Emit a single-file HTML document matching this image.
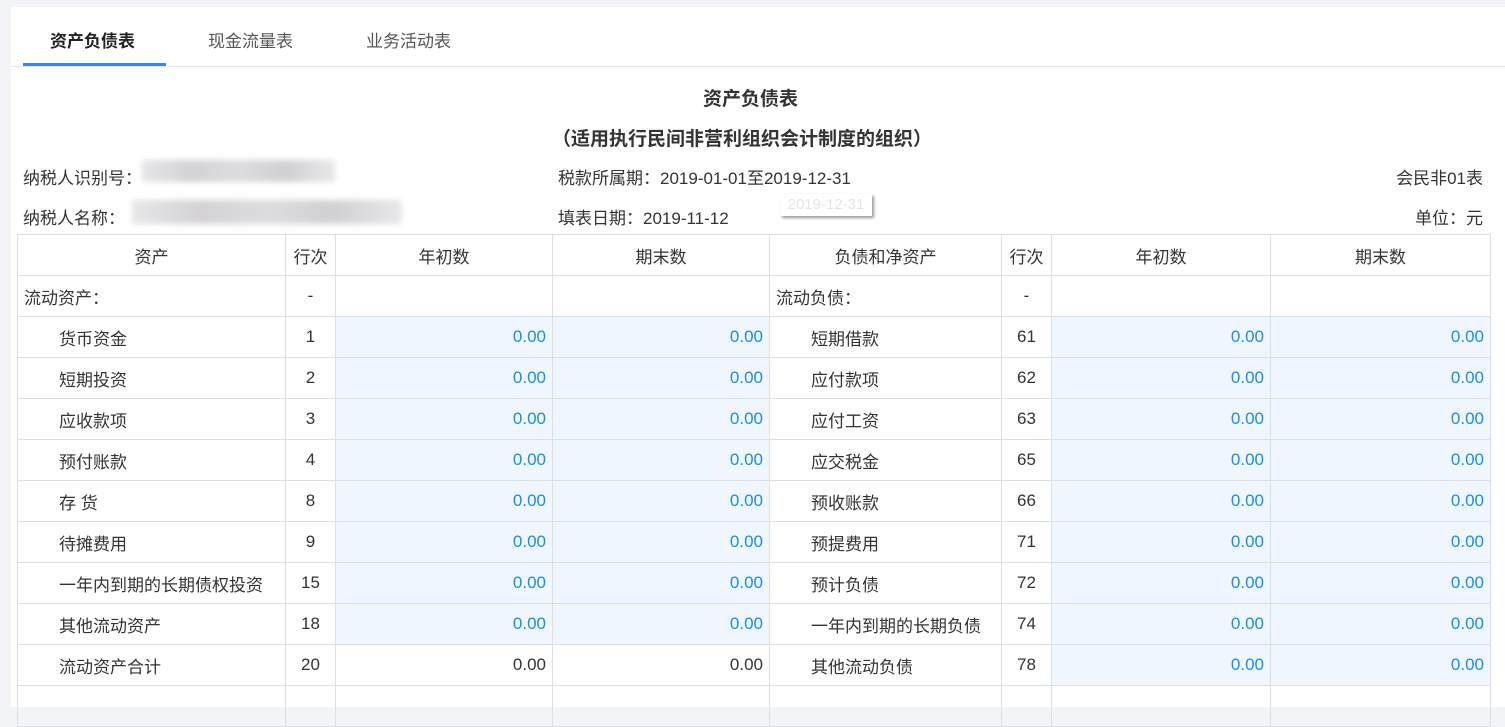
<!DOCTYPE html>
<html><head><meta charset="utf-8"><style>
body{margin:0;background:#f3f4f7;font-family:"Liberation Sans","Noto Sans CJK SC",sans-serif;color:#333;width:1505px;height:694px;overflow:hidden;position:relative}
.panel{position:absolute;left:11px;top:7px;width:1494px;height:700px;background:#fff}
.tabs{position:absolute;left:0;top:0;width:1494px;height:59px;border-bottom:1px solid #e4e6ea}
.tab{position:absolute;top:20px;font-size:17px;color:#555}
.tab.a{color:#222;font-weight:bold}
.ul{position:absolute;left:12px;top:56px;width:143px;height:3px;background:#3a86f0}
.t{position:absolute;font-size:17px;color:#333;white-space:nowrap}
.blur{position:absolute;background:linear-gradient(90deg,#e6e6e8,#d4d2d4,#dcdcde,#d0d0d2,#e8e8ea);filter:blur(3px)}
table{position:absolute;left:17px;top:234px;border-collapse:collapse;font-size:17px;table-layout:fixed}
td{border:1px solid #dcdfe4;height:40px;padding:0 6px;color:#333;white-space:nowrap;overflow:hidden}
td.c{text-align:center}
td.v{background:#f0f6fd;color:#1a8ee0;text-align:right}
td.r{text-align:right}
td.i{padding-left:41px}
</style></head><body>
<div class="panel">
<div class="tabs">
<div class="tab a" style="left:39px">资产负债表</div>
<div class="tab" style="left:197px">现金流量表</div>
<div class="tab" style="left:355px">业务活动表</div>
<div class="ul"></div>
</div>
</div>
<div class="t" style="left:703px;top:84px;font-weight:bold;font-size:19px">资产负债表</div>
<div class="t" style="left:552px;top:124px;font-weight:bold;font-size:19px">（适用执行民间非营利组织会计制度的组织）</div>
<div class="t" style="left:23px;top:164px">纳税人识别号：</div>
<div class="blur" style="left:142px;top:160px;width:193px;height:22px"></div>
<div class="t" style="left:23px;top:204px">纳税人名称：</div>
<div class="blur" style="left:132px;top:200px;width:270px;height:24px"></div>
<div class="t" style="left:558px;top:164px">税款所属期：2019-01-01至2019-12-31</div>
<div class="t" style="left:558px;top:204px">填表日期：2019-11-12</div>
<div style="position:absolute;left:780px;top:194px;width:92px;height:22px;background:#fff;box-shadow:2px 2px 3px #999;color:#e6e6e6;font-size:15px;text-align:center;line-height:22px">2019-12-31</div>
<div class="t" style="right:22px;top:164px">会民非01表</div>
<div class="t" style="right:22px;top:204px">单位：元</div>
<table>
<colgroup><col style="width:268px"><col style="width:50px"><col style="width:217px"><col style="width:217px"><col style="width:232px"><col style="width:50px"><col style="width:219px"><col style="width:220px"></colgroup>
<tr><td class="c">资产</td><td class="c">行次</td><td class="c">年初数</td><td class="c">期末数</td><td class="c">负债和净资产</td><td class="c">行次</td><td class="c">年初数</td><td class="c">期末数</td></tr>
<tr><td>流动资产：</td><td class="c">-</td><td></td><td></td><td>流动负债：</td><td class="c">-</td><td></td><td></td></tr>
<tr><td class="i">货币资金</td><td class="c">1</td><td class="v">0.00</td><td class="v">0.00</td><td class="i">短期借款</td><td class="c">61</td><td class="v">0.00</td><td class="v">0.00</td></tr>
<tr><td class="i">短期投资</td><td class="c">2</td><td class="v">0.00</td><td class="v">0.00</td><td class="i">应付款项</td><td class="c">62</td><td class="v">0.00</td><td class="v">0.00</td></tr>
<tr><td class="i">应收款项</td><td class="c">3</td><td class="v">0.00</td><td class="v">0.00</td><td class="i">应付工资</td><td class="c">63</td><td class="v">0.00</td><td class="v">0.00</td></tr>
<tr><td class="i">预付账款</td><td class="c">4</td><td class="v">0.00</td><td class="v">0.00</td><td class="i">应交税金</td><td class="c">65</td><td class="v">0.00</td><td class="v">0.00</td></tr>
<tr><td class="i">存 货</td><td class="c">8</td><td class="v">0.00</td><td class="v">0.00</td><td class="i">预收账款</td><td class="c">66</td><td class="v">0.00</td><td class="v">0.00</td></tr>
<tr><td class="i">待摊费用</td><td class="c">9</td><td class="v">0.00</td><td class="v">0.00</td><td class="i">预提费用</td><td class="c">71</td><td class="v">0.00</td><td class="v">0.00</td></tr>
<tr><td class="i">一年内到期的长期债权投资</td><td class="c">15</td><td class="v">0.00</td><td class="v">0.00</td><td class="i">预计负债</td><td class="c">72</td><td class="v">0.00</td><td class="v">0.00</td></tr>
<tr><td class="i">其他流动资产</td><td class="c">18</td><td class="v">0.00</td><td class="v">0.00</td><td class="i">一年内到期的长期负债</td><td class="c">74</td><td class="v">0.00</td><td class="v">0.00</td></tr>
<tr><td class="i">流动资产合计</td><td class="c">20</td><td class="r">0.00</td><td class="r">0.00</td><td class="i">其他流动负债</td><td class="c">78</td><td class="v">0.00</td><td class="v">0.00</td></tr>
<tr><td></td><td></td><td></td><td></td><td></td><td></td><td></td><td></td></tr>
</table>
</body></html>
